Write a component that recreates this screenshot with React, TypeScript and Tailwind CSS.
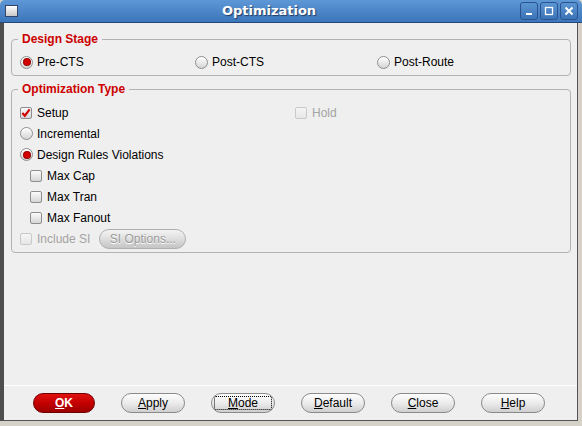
import React from 'react';

const sans = { fontFamily: '"Liberation Sans", Arial, sans-serif' };

const Radio = ({ checked, label }: { checked?: boolean; label: string }) => (
    <div className="flex items-center h-[18px]">
        <span className="w-[13px] h-[13px] rounded-full border border-[#8e8e8e] bg-linear-to-b from-white to-[#d4d4d4] flex items-center justify-center shadow-[inset_0_1px_0_#fff]">
            {checked && <span className="w-[6px] h-[6px] rounded-full bg-[#d40000] shadow-[0_0_0_1px_#9a0000]" />}
        </span>
        <span className="ml-[4px] text-[12px] text-black">{label}</span>
    </div>
);

const Check = ({ checked, disabled, label }: { checked?: boolean; disabled?: boolean; label: string }) => (
    <div className="flex items-center">
        <span className={`w-[12px] h-[12px] rounded-[2px] border flex items-center justify-center ${disabled ? 'border-[#c9c9c9] bg-linear-to-b from-[#f6f6f6] to-[#e6e6e6]' : 'border-[#8e8e8e] bg-linear-to-b from-[#fbfbfb] to-[#d6d6d6]'}`}>
            {checked && (
                <svg width="10" height="10" viewBox="0 0 11 11">
                    <path d="M1.5 5.5 L4.2 8.5 L9.5 1.5" fill="none" stroke="#d00000" strokeWidth="2.4" />
                </svg>
            )}
        </span>
        <span className={`ml-[5px] text-[12px] ${disabled ? 'text-[#a3a3a3]' : 'text-black'}`}>{label}</span>
    </div>
);

const Btn = ({ children, focus }: { children: React.ReactNode; focus?: boolean }) => (
    <button className="w-[64px] h-[20px] rounded-full border border-[#8a8a8a] bg-linear-to-b from-[#fdfdfd] via-[#ececec] to-[#cfcfcf] text-[12px] text-black flex items-center justify-center p-[2px]">
        <span className={`w-full h-full flex items-center justify-center rounded-[2px] ${focus ? 'border border-dotted border-black' : 'border border-transparent'}`}>
            {children}
        </span>
    </button>
);

const TitleBtn = ({ children }: { children: React.ReactNode }) => (
    <div className="w-[18px] h-[18px] rounded-[3px] border border-[#29548f] bg-linear-to-b from-[#5c95d3] to-[#3b73b6] flex items-center justify-center">
        <svg width="12" height="12" viewBox="0 0 12 12">{children}</svg>
    </div>
);

const App = () => {
    return (
        <div className="w-[582px] h-[426px] bg-[#d6d2ca] flex flex-col overflow-hidden" style={sans}>
            {/* Title bar */}
            <div className="h-[23px] rounded-t-[5px] bg-linear-to-b from-[#5d97d6] to-[#3c76bb] border-b border-[#25477a] flex items-center px-[5px] relative">
                <div className="w-[13px] h-[12px] border border-[#33466a] bg-linear-to-b from-white to-[#c8c8c8]" />
                <div className="flex-1 text-center text-white font-bold text-[13px] [text-shadow:1px_1px_1px_#1d3a66]" style={{ fontFamily: '"DejaVu Sans", sans-serif' }}>
                    Optimization
                </div>
                <div className="flex gap-[2px] -mr-[1px]">
                    <TitleBtn><rect x="3" y="8" width="6" height="2" fill="white" /></TitleBtn>
                    <TitleBtn><rect x="2.5" y="2.5" width="7" height="7" fill="none" stroke="white" strokeWidth="1.3" /></TitleBtn>
                    <TitleBtn><path d="M2.5 2.5 L9.5 9.5 M9.5 2.5 L2.5 9.5" stroke="white" strokeWidth="2" /></TitleBtn>
                </div>
            </div>

            {/* Body */}
            <div className="flex-1 flex pr-[4px] pb-[5px]">
                <div className="w-[4px] bg-[#4e4e4e]" />
                <div className="flex-1 flex flex-col bg-[#efefef] border-r border-b border-[#555]">
                    {/* Design Stage */}
                    <fieldset className="ml-[7px] mr-[6px] mt-[9px] border border-[#b3b3b3] rounded-[4px] pl-[8px] pr-0 pt-[7px] pb-[4px]">
                        <legend className="-ml-[2px] px-[4px] text-[12px] leading-[14px] font-bold text-[#cc0000]">Design Stage</legend>
                        <div className="flex">
                            <div className="w-[175px]"><Radio checked label="Pre-CTS" /></div>
                            <div className="w-[182px]"><Radio label="Post-CTS" /></div>
                            <div><Radio label="Post-Route" /></div>
                        </div>
                    </fieldset>

                    {/* Optimization Type */}
                    <fieldset className="ml-[7px] mr-[6px] mt-[6px] border border-[#b3b3b3] rounded-[4px] pl-[8px] pt-[6px] pb-[3px]">
                        <legend className="-ml-[2px] px-[4px] text-[12px] leading-[14px] font-bold text-[#cc0000]">Optimization Type</legend>
                        <div className="h-[21px] flex items-center">
                            <div className="w-[275px]"><Check checked label="Setup" /></div>
                            <Check disabled label="Hold" />
                        </div>
                        <div className="h-[21px] flex items-center"><Radio label="Incremental" /></div>
                        <div className="h-[21px] flex items-center"><Radio checked label="Design Rules Violations" /></div>
                        <div className="h-[21px] flex items-center pl-[10px]"><Check label="Max Cap" /></div>
                        <div className="h-[21px] flex items-center pl-[10px]"><Check label="Max Tran" /></div>
                        <div className="h-[21px] flex items-center pl-[10px]"><Check label="Max Fanout" /></div>
                        <div className="h-[21px] flex items-center">
                            <Check disabled label="Include SI" />
                            <button className="ml-[9px] w-[87px] h-[20px] rounded-full border border-[#b0b0b0] bg-linear-to-b from-[#f4f4f4] via-[#dedede] to-[#c4c4c4] text-[12px] text-[#9a9a9a] [text-shadow:0_1px_0_#fff]">
                                SI Options...
                            </button>
                        </div>
                    </fieldset>

                    <div className="flex-1" />

                    {/* Buttons */}
                    <div className="border-t border-white h-[35px] flex items-start pt-[7px] pl-[29px] gap-[26px]">
                        <button className="w-[62px] h-[20px] rounded-full border border-[#6e0000] bg-linear-to-b from-[#e01010] via-[#c40000] to-[#9c0000] text-white font-bold text-[12px] flex items-center justify-center">
                            <span><span className="underline">O</span>K</span>
                        </button>
                        <Btn><span><span className="underline">A</span>pply</span></Btn>
                        <Btn focus><span><span className="underline">M</span>ode</span></Btn>
                        <Btn><span><span className="underline">D</span>efault</span></Btn>
                        <Btn><span><span className="underline">C</span>lose</span></Btn>
                        <Btn><span><span className="underline">H</span>elp</span></Btn>
                    </div>
                </div>
            </div>
        </div>
    );
};

export default App;
